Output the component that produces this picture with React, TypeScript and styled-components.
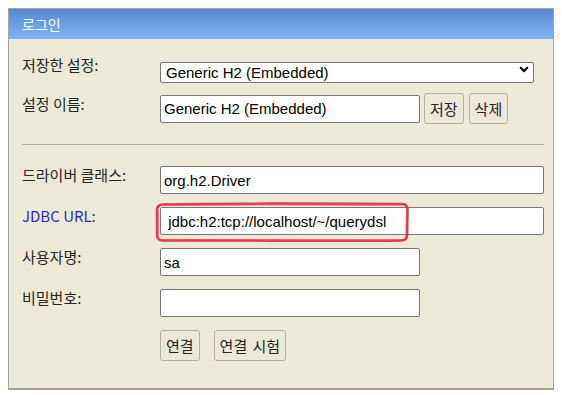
import React from "react";
import styled, { createGlobalStyle } from "styled-components";

const GlobalStyle = createGlobalStyle`
  body {
    margin: 8px;
    background: #fff;
    font-family: "Noto Sans CJK KR", "Liberation Sans", sans-serif;
  }
`

const Panel = styled.div`
  width: 544px;
  border: 1px solid #a3a3a3;
  border-bottom: 2px solid #a6a395;
  background: #ece9d8;
`

const Header = styled.div`
  height: 30px;
  padding-left: 13px;
  background: linear-gradient(to bottom, #5787d0, #7db4f4);
  color: #fff;
  font-size: 14px;
  line-height: 30px;
`

const Body = styled.div`
  display: flex;
  flex-direction: column;
  padding: 20px 9px 27px 13px;
`

const Row = styled.div<{ $mt?: number }>`
  display: flex;
  align-items: center;
  margin-top: ${p => p.$mt ?? 0}px;
`

const Label = styled.label<{ $link?: boolean }>`
  flex: none;
  width: 138px;
  margin-top: -10px;
  font-size: 15px;
  line-height: 18px;
  color: ${p => (p.$link ? "#2b2bc9" : "#262626")};
`

const SelectWrap = styled.div`
  position: relative;
  width: 374px;
  height: 21px;
`

const Select = styled.select`
  appearance: none;
  box-sizing: border-box;
  width: 100%;
  height: 100%;
  padding: 0 5px;
  border: 1px solid #767676;
  border-radius: 2px;
  background: #fff;
  color: #000;
  font: 15px "Liberation Sans", Arial, sans-serif;
  outline: none;
`

const Chevron = styled.svg`
  position: absolute;
  right: 5px;
  top: 7px;
  pointer-events: none;
`

const Field = styled.div`
  position: relative;
  display: flex;
`

const TextInput = styled.input<{ $w: number }>`
  box-sizing: border-box;
  width: ${p => p.$w}px;
  height: 28px;
  padding: 0 3px;
  border: 1px solid #767676;
  border-radius: 2px;
  background: #fff;
  color: #000;
  font: 15px "Liberation Sans", Arial, sans-serif;
  outline: none;
`

const Button = styled.button<{ $ml?: number }>`
  height: 31px;
  margin-left: ${p => p.$ml ?? 0}px;
  padding: 0 5px;
  border: 1px solid #b3b0a3;
  border-radius: 3px;
  background: #ebe8da;
  color: #262626;
  font: 15px "Noto Sans CJK KR", sans-serif;
  line-height: 18px;
  word-spacing: 2px;
`

const Divider = styled.div`
  height: 1px;
  margin-top: 20px;
  background: #a9a9a9;
`

const Marker = styled.svg`
  position: absolute;
  left: -6px;
  top: -6px;
  pointer-events: none;
`

const HighlightMark = () => (
  <Marker width="258" height="43" viewBox="0 0 258 43">
    <path
      d="M9 3.5 C 70 2, 170 2.8, 248 3 Q 253.5 3.2 253.5 9 L 253 34 Q 253 39.5 247 39.5 C 170 40.5, 90 39, 9 39.5 Q 3 39.5 3.2 34 L 3 9 Q 3.2 3.5 9 3.5 Z"
      fill="none"
      stroke="#e8354c"
      strokeWidth="2.6"
    />
    <path
      d="M10 4.5 C 90 3.5, 180 4, 247 4.2 M 252.5 10 L 252 33 M 246 38.6 C 160 39.5, 80 38.2, 10 38.8 M 4 33 L 4.2 10"
      fill="none"
      stroke="#f0596b"
      strokeWidth="1.2"
      opacity="0.7"
    />
  </Marker>
)

export default function App() {
  return (
    <>
      <GlobalStyle />
      <Panel>
        <Header>로그인</Header>
        <Body>
          <Row>
            <Label>저장한 설정:</Label>
            <SelectWrap>
              <Select defaultValue="h2">
                <option value="h2">Generic H2 (Embedded)</option>
              </Select>
              <Chevron width="10" height="7" viewBox="0 0 10 7">
                <path d="M1.2 1.2 L5 5 L8.8 1.2" fill="none" stroke="#000" strokeWidth="2" />
              </Chevron>
            </SelectWrap>
          </Row>
          <Row $mt={13}>
            <Label>설정 이름:</Label>
            <TextInput $w={260} defaultValue="Generic H2 (Embedded)" />
            <Button type="button" $ml={4}>저장</Button>
            <Button type="button" $ml={5}>삭제</Button>
          </Row>
          <Divider />
          <Row $mt={21}>
            <Label>드라이버 클래스:</Label>
            <TextInput $w={384} defaultValue="org.h2.Driver" />
          </Row>
          <Row $mt={13}>
            <Label $link>JDBC URL:</Label>
            <Field>
              <TextInput $w={384} defaultValue=" jdbc:h2:tcp://localhost/~/querydsl" />
              <HighlightMark />
            </Field>
          </Row>
          <Row $mt={13}>
            <Label>사용자명:</Label>
            <TextInput $w={260} defaultValue="sa" />
          </Row>
          <Row $mt={13}>
            <Label>비밀번호:</Label>
            <TextInput $w={260} type="password" />
          </Row>
          <Row $mt={13}>
            <Label />
            <Button type="button">연결</Button>
            <Button type="button" $ml={14}>연결 시험</Button>
          </Row>
        </Body>
      </Panel>
    </>
  )
}
